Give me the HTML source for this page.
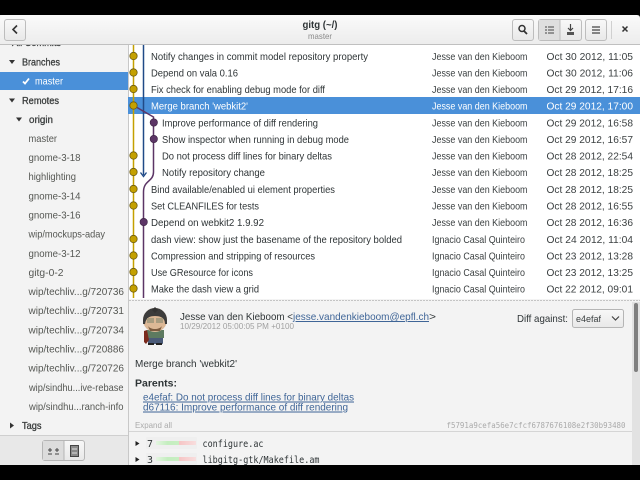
<!DOCTYPE html>
<html><head><meta charset="utf-8"><style>
html,body{margin:0;padding:0;background:#000;width:640px;height:480px;overflow:hidden}
svg{display:block;position:absolute;left:0;top:0}
text{font-family:"Liberation Sans",sans-serif;font-size:10.1px;fill:#2e3436}
.s{fill:#555753}.b{fill:#3a3d3d;stroke:#3a3d3d;stroke-width:.3px}
.a{fill:#3a3f40}
.w{fill:#fff}
.m{font-family:"DejaVu Sans Mono",monospace}
.l{fill:#3f6597;text-decoration:underline}
</style></head><body>
<svg width="640" height="480" viewBox="0 0 640 480" xmlns="http://www.w3.org/2000/svg" style="filter:blur(.35px)">
<defs><linearGradient id="h" x1="0" y1="0" x2="0" y2="1"><stop offset="0" stop-color="#fafafa"/><stop offset="1" stop-color="#ececec"/></linearGradient>
<linearGradient id="bt" x1="0" y1="0" x2="0" y2="1"><stop offset="0" stop-color="#f8f8f8"/><stop offset="1" stop-color="#e8e8e8"/></linearGradient>
<linearGradient id="gr" x1="0" y1="0" x2="1" y2="0"><stop offset="0" stop-color="#e4f5e2"/><stop offset=".5" stop-color="#c4eebf"/><stop offset="1" stop-color="#c8efc2"/></linearGradient>
<linearGradient id="rd" x1="0" y1="0" x2="1" y2="0"><stop offset="0" stop-color="#f6c4c4"/><stop offset="1" stop-color="#f8dede"/></linearGradient></defs>
<rect width="640" height="480" fill="#000"/>
<!-- sidebar -->
<rect x="0" y="15" width="128" height="450" fill="#f3f3f3"/>
<text x="12" y="46" class="b" textLength="49" lengthAdjust="spacingAndGlyphs">All Commits</text>
<path d="M9 60h6l-3 4z" fill="#333"/><text x="22" y="65.500" class="b" textLength="38" lengthAdjust="spacingAndGlyphs">Branches</text>
<rect x="0" y="72" width="128" height="18" fill="#4a90d9"/>
<path d="M23 81.500l2 2 4-5" stroke="#fff" stroke-width="1.800" fill="none"/><text x="35" y="84.500" class="w" textLength="28" lengthAdjust="spacingAndGlyphs">master</text>
<path d="M9 98.500h6l-3 4z" fill="#333"/><text x="22" y="104" class="b" textLength="37" lengthAdjust="spacingAndGlyphs">Remotes</text>
<path d="M16 117.500h6l-3 4z" fill="#333"/><text x="29" y="123" class="b" textLength="24" lengthAdjust="spacingAndGlyphs">origin</text>
<g class="side">
<text x="28.500" y="142" class="s" textLength="28.500" lengthAdjust="spacingAndGlyphs">master</text>
<text x="28.500" y="161" class="s" textLength="52" lengthAdjust="spacingAndGlyphs">gnome-3-18</text>
<text x="28.500" y="180" class="s" textLength="47.500" lengthAdjust="spacingAndGlyphs">highlighting</text>
<text x="28.500" y="199.500" class="s" textLength="52" lengthAdjust="spacingAndGlyphs">gnome-3-14</text>
<text x="28.500" y="218.500" class="s" textLength="52" lengthAdjust="spacingAndGlyphs">gnome-3-16</text>
<text x="28.500" y="237.500" class="s" textLength="76.500" lengthAdjust="spacingAndGlyphs">wip/mockups-aday</text>
<text x="28.500" y="257" class="s" textLength="52" lengthAdjust="spacingAndGlyphs">gnome-3-12</text>
<text x="28.500" y="276" class="s" textLength="35" lengthAdjust="spacingAndGlyphs">gitg-0-2</text>
<text x="28.500" y="295" class="s" textLength="95.500" lengthAdjust="spacingAndGlyphs">wip/techliv...g/720736</text>
<text x="28.500" y="314" class="s" textLength="95.500" lengthAdjust="spacingAndGlyphs">wip/techliv...g/720731</text>
<text x="28.500" y="333.500" class="s" textLength="95.500" lengthAdjust="spacingAndGlyphs">wip/techliv...g/720734</text>
<text x="28.500" y="352.500" class="s" textLength="95.500" lengthAdjust="spacingAndGlyphs">wip/techliv...g/720886</text>
<text x="28.500" y="371.500" class="s" textLength="95.500" lengthAdjust="spacingAndGlyphs">wip/techliv...g/720726</text>
<text x="29" y="391" class="s" textLength="94.500" lengthAdjust="spacingAndGlyphs">wip/sindhu...ive-rebase</text>
<text x="29" y="410" class="s" textLength="94.500" lengthAdjust="spacingAndGlyphs">wip/sindhu...ranch-info</text>
</g>
<path d="M10 422.500v6l4-3z" fill="#333"/><text x="22" y="429" class="b" textLength="19.500" lengthAdjust="spacingAndGlyphs">Tags</text>
<!-- sidebar toolbar -->
<rect x="0" y="435" width="128" height="30" fill="#e8e8e8"/><rect x="0" y="435" width="128" height="1" fill="#cfcfcf"/>
<rect x="42.500" y="440.500" width="42" height="20" rx="2.500" fill="url(#bt)" stroke="#b5b5b5"/>
<path d="M43 441h21v19H43z" fill="#dcdcdc"/><path d="M64 440v21" stroke="#b5b5b5"/>
<path d="M48 450h4M50 448v4M55 450h4M57 448v4M48 454h4M55 454h4" stroke="#444" stroke-width="1"/>
<rect x="70.500" y="445.500" width="8" height="11" fill="#8a8a8a" stroke="#444"/><path d="M72 449h5M72 453h5" stroke="#ddd"/>
<rect x="128" y="45" width="1" height="420" fill="#c8c8c8"/>
<!-- commit list -->
<rect x="129" y="45" width="511" height="254" fill="#fff"/>
<rect x="128" y="97" width="512" height="17" fill="#4a90d9"/>
<!-- graph -->
<path d="M133.500 45V298" stroke="#c4a000" stroke-width="1.500" fill="none"/>
<path d="M143.500 45V175" stroke="#204a87" stroke-width="1.500" fill="none"/>
<path d="M140.500 172.500l3 4 3-4" stroke="#204a87" stroke-width="1.300" fill="none"/>
<path d="M133.500 105.500L153.500 117V172C153.500 182 143.500 180 143.500 192V298" stroke="#5c3566" stroke-width="1.500" fill="none"/>
<g fill="#c4a000" stroke="#6b5a10" stroke-width=".8">
<circle cx="133.500" cy="56" r="3.700"/><circle cx="133.500" cy="72.500" r="3.700"/><circle cx="133.500" cy="89" r="3.700"/><circle cx="133.500" cy="105.500" r="3.700"/><circle cx="133.500" cy="155.500" r="3.700"/><circle cx="133.500" cy="172" r="3.700"/><circle cx="133.500" cy="189" r="3.700"/><circle cx="133.500" cy="205.500" r="3.700"/><circle cx="133.500" cy="239" r="3.700"/><circle cx="133.500" cy="255.500" r="3.700"/><circle cx="133.500" cy="272" r="3.700"/><circle cx="133.500" cy="288.500" r="3.700"/>
</g>
<g fill="#5c3566" stroke="#3b2242" stroke-width=".6"><circle cx="153.800" cy="122.500" r="3.700"/><circle cx="153.800" cy="139" r="3.700"/><circle cx="143.700" cy="222" r="3.700"/></g>
<!-- commit text -->
<text x="151" y="60" textLength="217" lengthAdjust="spacingAndGlyphs">Notify changes in commit model repository property</text>
<text x="151" y="76.500" textLength="87" lengthAdjust="spacingAndGlyphs">Depend on vala 0.16</text>
<text x="151" y="93" textLength="174" lengthAdjust="spacingAndGlyphs">Fix check for enabling debug mode for diff</text>
<text x="151" y="109.500" class="w" textLength="97" lengthAdjust="spacingAndGlyphs">Merge branch 'webkit2'</text>
<text x="162" y="126.500" textLength="156" lengthAdjust="spacingAndGlyphs">Improve performance of diff rendering</text>
<text x="162" y="143" textLength="187" lengthAdjust="spacingAndGlyphs">Show inspector when running in debug mode</text>
<text x="162" y="159.500" textLength="170" lengthAdjust="spacingAndGlyphs">Do not process diff lines for binary deltas</text>
<text x="162" y="176" textLength="103" lengthAdjust="spacingAndGlyphs">Notify repository change</text>
<text x="151" y="193" textLength="184" lengthAdjust="spacingAndGlyphs">Bind available/enabled ui element properties</text>
<text x="151" y="209.500" textLength="108" lengthAdjust="spacingAndGlyphs">Set CLEANFILES for tests</text>
<text x="151" y="226" textLength="113" lengthAdjust="spacingAndGlyphs">Depend on webkit2 1.9.92</text>
<text x="151" y="243" textLength="251" lengthAdjust="spacingAndGlyphs">dash view: show just the basename of the repository bolded</text>
<text x="151" y="259.500" textLength="164" lengthAdjust="spacingAndGlyphs">Compression and stripping of resources</text>
<text x="151" y="276" textLength="102" lengthAdjust="spacingAndGlyphs">Use GResource for icons</text>
<text x="151" y="292.500" textLength="108" lengthAdjust="spacingAndGlyphs">Make the dash view a grid</text>
<!-- authors -->
<g>
<text x="432" y="60" class="a" textLength="95.500" lengthAdjust="spacingAndGlyphs">Jesse van den Kieboom</text>
<text x="432" y="76.500" class="a" textLength="95.500" lengthAdjust="spacingAndGlyphs">Jesse van den Kieboom</text>
<text x="432" y="93" class="a" textLength="95.500" lengthAdjust="spacingAndGlyphs">Jesse van den Kieboom</text>
<text x="432" y="109.500" class="w" textLength="95.500" lengthAdjust="spacingAndGlyphs">Jesse van den Kieboom</text>
<text x="432" y="126.500" class="a" textLength="95.500" lengthAdjust="spacingAndGlyphs">Jesse van den Kieboom</text>
<text x="432" y="143" class="a" textLength="95.500" lengthAdjust="spacingAndGlyphs">Jesse van den Kieboom</text>
<text x="432" y="159.500" class="a" textLength="95.500" lengthAdjust="spacingAndGlyphs">Jesse van den Kieboom</text>
<text x="432" y="176" class="a" textLength="95.500" lengthAdjust="spacingAndGlyphs">Jesse van den Kieboom</text>
<text x="432" y="193" class="a" textLength="95.500" lengthAdjust="spacingAndGlyphs">Jesse van den Kieboom</text>
<text x="432" y="209.500" class="a" textLength="95.500" lengthAdjust="spacingAndGlyphs">Jesse van den Kieboom</text>
<text x="432" y="226" class="a" textLength="95.500" lengthAdjust="spacingAndGlyphs">Jesse van den Kieboom</text>
<text x="432" y="243" class="a" textLength="93" lengthAdjust="spacingAndGlyphs">Ignacio Casal Quinteiro</text>
<text x="432" y="259.500" class="a" textLength="93" lengthAdjust="spacingAndGlyphs">Ignacio Casal Quinteiro</text>
<text x="432" y="276" class="a" textLength="93" lengthAdjust="spacingAndGlyphs">Ignacio Casal Quinteiro</text>
<text x="432" y="292.500" class="a" textLength="93" lengthAdjust="spacingAndGlyphs">Ignacio Casal Quinteiro</text>
</g>
<!-- dates -->
<g>
<text x="546.500" y="60" class="a" textLength="86.500" lengthAdjust="spacingAndGlyphs">Oct 30 2012, 11:05</text>
<text x="546.500" y="76.500" class="a" textLength="86.500" lengthAdjust="spacingAndGlyphs">Oct 30 2012, 11:06</text>
<text x="546.500" y="93" class="a" textLength="86.500" lengthAdjust="spacingAndGlyphs">Oct 29 2012, 17:16</text>
<text x="546.500" y="109.500" class="w" textLength="86.500" lengthAdjust="spacingAndGlyphs">Oct 29 2012, 17:00</text>
<text x="546.500" y="126.500" class="a" textLength="86.500" lengthAdjust="spacingAndGlyphs">Oct 29 2012, 16:58</text>
<text x="546.500" y="143" class="a" textLength="86.500" lengthAdjust="spacingAndGlyphs">Oct 29 2012, 16:57</text>
<text x="546.500" y="159.500" class="a" textLength="86.500" lengthAdjust="spacingAndGlyphs">Oct 28 2012, 22:54</text>
<text x="546.500" y="176" class="a" textLength="86.500" lengthAdjust="spacingAndGlyphs">Oct 28 2012, 18:25</text>
<text x="546.500" y="193" class="a" textLength="86.500" lengthAdjust="spacingAndGlyphs">Oct 28 2012, 18:25</text>
<text x="546.500" y="209.500" class="a" textLength="86.500" lengthAdjust="spacingAndGlyphs">Oct 28 2012, 16:55</text>
<text x="546.500" y="226" class="a" textLength="86.500" lengthAdjust="spacingAndGlyphs">Oct 28 2012, 16:36</text>
<text x="546.500" y="243" class="a" textLength="86.500" lengthAdjust="spacingAndGlyphs">Oct 24 2012, 11:04</text>
<text x="546.500" y="259.500" class="a" textLength="86.500" lengthAdjust="spacingAndGlyphs">Oct 23 2012, 13:28</text>
<text x="546.500" y="276" class="a" textLength="86.500" lengthAdjust="spacingAndGlyphs">Oct 23 2012, 13:25</text>
<text x="546.500" y="292.500" class="a" textLength="86.500" lengthAdjust="spacingAndGlyphs">Oct 22 2012, 09:01</text>
</g>
<!-- detail -->
<rect x="129" y="299" width="511" height="166" fill="#f3f3f3"/>
<path d="M129 300.500H640" stroke="#c4c4c4" stroke-dasharray="2 1"/>
<rect x="632" y="302" width="8" height="163" fill="#e2e2e2"/>
<rect x="634" y="303" width="4" height="69" rx="2" fill="#7f7f7f"/>
<!-- avatar -->
<g>
<rect x="148" y="336" width="15" height="8" rx="1" fill="#4a5a78"/>
<path d="M147 330h17v8h-17z" fill="#5d7a60"/>
<path d="M144 331l3-1 2 10-3 4-2-2z" fill="#7a2a1c"/>
<circle cx="155" cy="320" r="12" fill="#dcb896"/>
<path d="M143 320a12 12 0 0 1 24 0v4h-2c0-6-4-8-10-8s-9 2-10 8h-2z" fill="#3c3c3c"/>
<path d="M152 310l3-3 3 3-3 3z" fill="#333"/>
<rect x="147" y="318" width="7" height="5" fill="#a89c80"/><rect x="156" y="318" width="7" height="5" fill="#a89c80"/>
<path d="M148 326c3 4 11 4 14 0l-2 5h-10z" fill="#7b5b40"/>
<rect x="148" y="343" width="6" height="2" fill="#222"/><rect x="156" y="343" width="6" height="2" fill="#222"/>
</g>
<text x="180" y="320" textLength="113" lengthAdjust="spacingAndGlyphs">Jesse van den Kieboom &lt;</text>
<text x="293" y="320" class="l" textLength="136" lengthAdjust="spacingAndGlyphs">jesse.vandenkieboom@epfl.ch</text>
<text x="429" y="320" textLength="7" lengthAdjust="spacingAndGlyphs">&gt;</text>
<text x="180" y="329" style="font-size:8.500px;fill:#a0a0a0" textLength="114" lengthAdjust="spacingAndGlyphs">10/29/2012 05:00:05 PM +0100</text>
<text x="517" y="322" textLength="51" lengthAdjust="spacingAndGlyphs">Diff against:</text>
<rect x="572.500" y="309.500" width="51" height="18" rx="2" fill="url(#bt)" stroke="#b5b5b5"/>
<text x="576" y="322" style="font-size:9.500px" class="a" textLength="25" lengthAdjust="spacingAndGlyphs">e4efaf</text>
<path d="M612 316.500l3.500 3.500 3.500-3.500" stroke="#444" stroke-width="1.200" fill="none"/>
<text x="135" y="367" textLength="102" lengthAdjust="spacingAndGlyphs">Merge branch 'webkit2'</text>
<text x="135" y="386.500" style="font-weight:bold" textLength="42" lengthAdjust="spacingAndGlyphs">Parents:</text>
<text x="143" y="400.500" class="l" textLength="211" lengthAdjust="spacingAndGlyphs">e4efaf: Do not process diff lines for binary deltas</text>
<text x="143" y="410.500" class="l" textLength="205" lengthAdjust="spacingAndGlyphs">d67116: Improve performance of diff rendering</text>
<text x="135" y="428" style="font-size:8.500px;fill:#aaa" textLength="37" lengthAdjust="spacingAndGlyphs">Expand all</text>
<text x="446.500" y="428" class="m" style="font-size:7.500px;fill:#aaa" textLength="179" lengthAdjust="spacingAndGlyphs">f5791a9cefa56e7cfcf6787676108e2f30b93480</text>
<rect x="129" y="431" width="503" height="1" fill="#d5d5d5"/>
<path d="M135.500 441v5l4-2.500z" fill="#222"/>
<rect x="146" y="437" width="51" height="12" rx="1" fill="#efefef"/>
<text x="147" y="447" class="m" style="font-size:10px" textLength="6" lengthAdjust="spacingAndGlyphs">7</text>
<rect x="156" y="441" width="23" height="4" fill="url(#gr)"/><rect x="179" y="441" width="17" height="4" fill="url(#rd)"/>
<text x="202.500" y="447" class="m" style="font-size:10px" textLength="61" lengthAdjust="spacingAndGlyphs">configure.ac</text>
<path d="M135.500 457v5l4-2.500z" fill="#222"/>
<rect x="146" y="453" width="51" height="12" rx="1" fill="#efefef"/>
<text x="147" y="463" class="m" style="font-size:10px" textLength="6" lengthAdjust="spacingAndGlyphs">3</text>
<rect x="156" y="457" width="23" height="4" fill="url(#gr)"/><rect x="179" y="457" width="17" height="4" fill="url(#rd)"/>
<text x="202.500" y="463" class="m" style="font-size:10px" textLength="117" lengthAdjust="spacingAndGlyphs">libgitg-gtk/Makefile.am</text>
<!-- header -->
<path d="M0 45V18q0-3 3-3H637q3 0 3 3V45z" fill="url(#h)"/>
<rect x="0" y="44" width="640" height="1" fill="#c0c0c0"/>
<rect x="4.500" y="19.500" width="21" height="21" rx="2.500" fill="url(#bt)" stroke="#bdbdbd"/>
<path d="M17 25.500l-4 4 4 4" stroke="#333" stroke-width="1.600" fill="none"/>
<text x="320" y="28" text-anchor="middle" style="font-weight:bold;font-size:10.100px" textLength="35" lengthAdjust="spacingAndGlyphs">gitg (~/)</text>
<text x="320" y="39" text-anchor="middle" style="font-size:8.500px;fill:#8a8a8a" textLength="24" lengthAdjust="spacingAndGlyphs">master</text>
<rect x="512.500" y="19.500" width="21" height="21" rx="2.500" fill="url(#bt)" stroke="#bdbdbd"/>
<circle cx="522" cy="28.500" r="3" fill="none" stroke="#333" stroke-width="1.500"/><path d="M524 31l3 3" stroke="#333" stroke-width="1.800"/>
<rect x="538.500" y="19.500" width="43" height="21" rx="2.500" fill="url(#bt)" stroke="#bdbdbd"/>
<path d="M539 20h21v20h-21z" fill="#dfdfdf"/><path d="M560 19v22" stroke="#bdbdbd"/>
<path d="M545 27h2M548 27h6M545 30h2M548 30h6M545 33h2M548 33h6" stroke="#444"/>
<path d="M570.500 24v6M568 28l2.500 2.500 2.500-2.500" stroke="#444" stroke-width="1.200" fill="none"/><rect x="567" y="32" width="7" height="3" fill="#555"/>
<rect x="585.500" y="19.500" width="21" height="21" rx="2.500" fill="url(#bt)" stroke="#bdbdbd"/>
<path d="M592 27h8M592 30h8M592 33h8" stroke="#444" stroke-width="1.200"/>
<path d="M611.500 21v18" stroke="#d0d0d0"/>
<path d="M622.500 26.500l5 5M627.500 26.500l-5 5" stroke="#333" stroke-width="1.500"/>
</svg>
</body></html>
